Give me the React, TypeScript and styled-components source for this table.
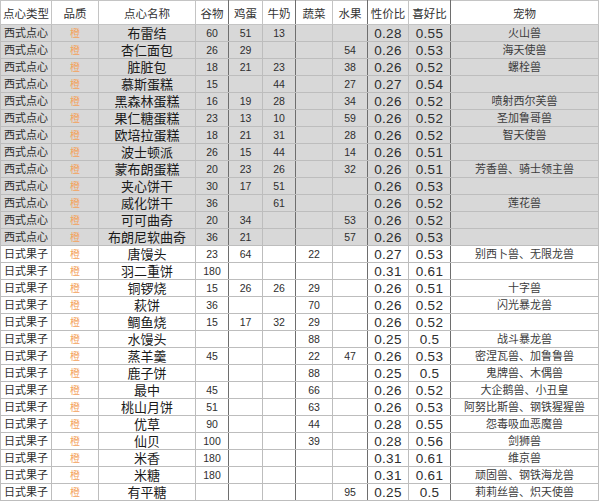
import React from "react";
import styled, { createGlobalStyle } from "styled-components";

const Global = createGlobalStyle`
  html, body { margin: 0; padding: 0; background: #ffffff; }
  body { font-family: "Liberation Sans", "Noto Sans CJK SC", sans-serif; }
`;

const Sheet = styled.table`
  border-collapse: collapse;
  table-layout: fixed;
  width: 599px;
  font-family: "Liberation Sans", "Noto Sans CJK SC", sans-serif;
  color: #333;
`;

const HeadRow = styled.tr`
  height: 24px;
  background: #ffffff;
`;

const BodyRow = styled.tr<{ $shade: boolean }>`
  height: 17px;
  background: ${(p) => (p.$shade ? "#d8d8d8" : "#ffffff")};
`;

const HeadCell = styled.th<{ $dark?: boolean }>`
  padding: 0;
  font-weight: 400;
  font-size: 11.5px;
  color: #333;
  text-align: center;
  white-space: nowrap;
  overflow: hidden;
  border: 1px solid #c4c4c4;
  border-right: 1px solid ${(p) => (p.$dark ? "#6e6e6e" : "#c4c4c4")};
`;

type Kind = "type" | "quality" | "name" | "num" | "ratio" | "pet";

const Cell = styled.td<{ $dark?: boolean; $kind: Kind }>`
  padding: 0;
  line-height: 15px;
  text-align: center;
  white-space: nowrap;
  overflow: hidden;
  border: 1px solid #bdbdbd;
  border-right: 1px solid ${(p) => (p.$dark ? "#6e6e6e" : "#bdbdbd")};
  font-size: ${(p) =>
    p.$kind === "name"
      ? "13px"
      : p.$kind === "ratio"
      ? "13.5px"
      : p.$kind === "quality"
      ? "10px"
      : p.$kind === "num"
      ? "10.5px"
      : "11px"};
  color: ${(p) =>
    p.$kind === "quality"
      ? "#f4a25a"
      : p.$kind === "name"
      ? "#1a1a1a"
      : p.$kind === "pet"
      ? "#3c3c3c"
      : "#2e2e2e"};
  letter-spacing: ${(p) => (p.$kind === "ratio" ? "0.3px" : "0")};
`;

const cols = [51, 47, 97, 33, 34, 33, 37, 35, 41, 42, 148];
const darkAfter = new Set([3, 5, 7, 9]);

const headers = ["点心类型", "品质", "点心名称", "谷物", "鸡蛋", "牛奶", "蔬菜", "水果", "性价比", "喜好比", "宠物"];

type Row = [string, string, string, string, string, string, string, string, string];
// name, grain, egg, milk, veg, fruit, cost, like, pet
const west: Row[] = [
  ["布雷结", "60", "51", "13", "", "", "0.28", "0.55", "火山兽"],
  ["杏仁面包", "26", "29", "", "", "54", "0.26", "0.53", "海天使兽"],
  ["脏脏包", "18", "21", "23", "", "38", "0.26", "0.52", "螺栓兽"],
  ["慕斯蛋糕", "15", "", "44", "", "27", "0.27", "0.54", ""],
  ["黑森林蛋糕", "16", "19", "28", "", "34", "0.26", "0.52", "喷射西尔芙兽"],
  ["果仁糖蛋糕", "23", "13", "10", "", "59", "0.26", "0.52", "圣加鲁哥兽"],
  ["欧培拉蛋糕", "18", "21", "31", "", "28", "0.26", "0.52", "智天使兽"],
  ["波士顿派", "26", "15", "44", "", "14", "0.26", "0.51", ""],
  ["蒙布朗蛋糕", "20", "23", "26", "", "32", "0.26", "0.51", "芳香兽、骑士领主兽"],
  ["夹心饼干", "30", "17", "51", "", "", "0.26", "0.53", ""],
  ["威化饼干", "36", "", "61", "", "", "0.26", "0.52", "莲花兽"],
  ["可可曲奇", "20", "34", "", "", "53", "0.26", "0.52", ""],
  ["布朗尼软曲奇", "36", "21", "", "", "57", "0.26", "0.53", ""],
];
const japan: Row[] = [
  ["唐馒头", "23", "64", "", "22", "", "0.27", "0.53", "别西卜兽、无限龙兽"],
  ["羽二重饼", "180", "", "", "", "", "0.31", "0.61", ""],
  ["铜锣烧", "15", "26", "26", "29", "", "0.26", "0.51", "十字兽"],
  ["萩饼", "36", "", "", "70", "", "0.26", "0.52", "闪光暴龙兽"],
  ["鲷鱼烧", "15", "17", "32", "29", "", "0.26", "0.52", ""],
  ["水馒头", "", "", "", "88", "", "0.25", "0.5", "战斗暴龙兽"],
  ["蒸羊羹", "45", "", "", "22", "47", "0.26", "0.53", "密涅瓦兽、加鲁鲁兽"],
  ["鹿子饼", "", "", "", "88", "", "0.25", "0.5", "鬼牌兽、木偶兽"],
  ["最中", "45", "", "", "66", "", "0.26", "0.52", "大企鹅兽、小丑皇"],
  ["桃山月饼", "51", "", "", "63", "", "0.26", "0.53", "阿努比斯兽、钢铁猩猩兽"],
  ["优草", "90", "", "", "44", "", "0.28", "0.55", "怨毒吸血恶魔兽"],
  ["仙贝", "100", "", "", "39", "", "0.28", "0.56", "剑狮兽"],
  ["米香", "180", "", "", "", "", "0.31", "0.61", "维京兽"],
  ["米糖", "180", "", "", "", "", "0.31", "0.61", "顽固兽、钢铁海龙兽"],
  ["有平糖", "", "", "", "", "95", "0.25", "0.5", "莉莉丝兽、炽天使兽"],
];

const rows = [
  ...west.map((r) => ({ type: "西式点心", shade: true, r })),
  ...japan.map((r) => ({ type: "日式果子", shade: false, r })),
];

const kinds: Kind[] = ["name", "num", "num", "num", "num", "num", "ratio", "ratio", "pet"];

export default function App() {
  return (
    <>
      <Global />
      <Sheet>
        <colgroup>
          {cols.map((w, i) => (
            <col key={i} style={{ width: w }} />
          ))}
        </colgroup>
        <thead>
          <HeadRow>
            {headers.map((h, i) => (
              <HeadCell key={h} $dark={darkAfter.has(i)}>
                {h}
              </HeadCell>
            ))}
          </HeadRow>
        </thead>
        <tbody>
          {rows.map(({ type, shade, r }, idx) => (
            <BodyRow key={idx} $shade={shade}>
              <Cell $kind="type">{type}</Cell>
              <Cell $kind="quality">橙</Cell>
              {r.map((v, j) => (
                <Cell key={j} $kind={kinds[j]} $dark={darkAfter.has(j + 2)}>
                  {v}
                </Cell>
              ))}
            </BodyRow>
          ))}
        </tbody>
      </Sheet>
    </>
  );
}
